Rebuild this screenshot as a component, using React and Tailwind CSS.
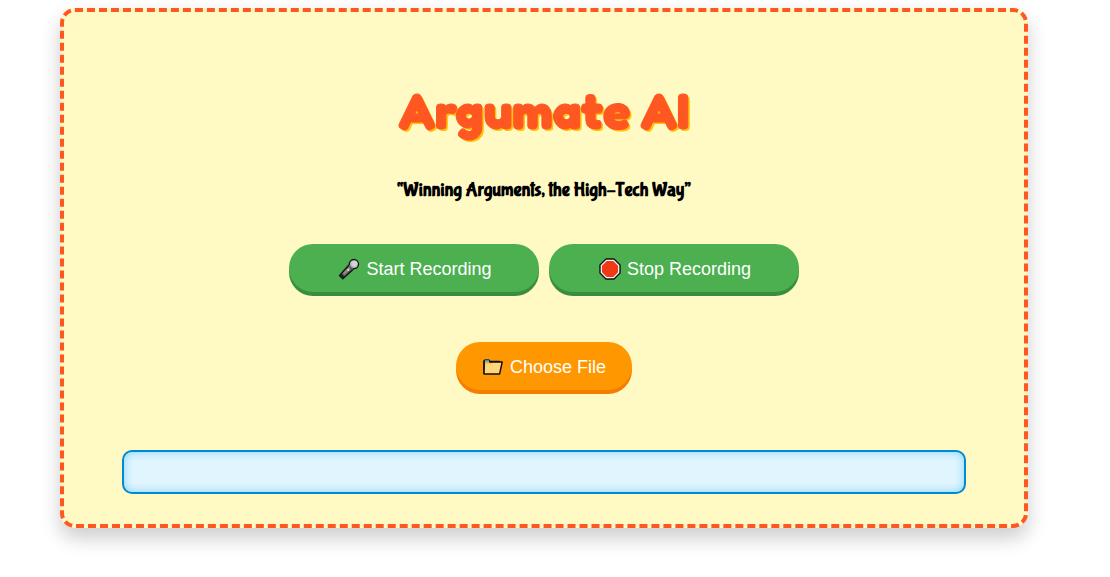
import React from 'react';

function MicIcon() {
  return (
    <svg aria-hidden="true" className="size-[22px] shrink-0" viewBox="0 0 22 22">
      <path d="M10.6 7.2 15 11.4 4.8 20.8 1.4 17.6Z" fill="#5f5f5f" stroke="#111" strokeWidth="1.3" strokeLinejoin="round" />
      <path d="M11 8.8 12.8 10.6 6.6 16.8 4.9 15.2Z" fill="#8d8d8d" />
      <path d="M2.8 16.4 5.8 19.4" stroke="#1c1c1c" strokeWidth="1.8" />
      <circle cx="15.9" cy="6.1" r="4.6" fill="#bdbdbd" stroke="#111" strokeWidth="1.3" />
      <path d="M11.1 7.2 14.8 10.9" stroke="#7a7a7a" strokeWidth="1.4" />
      <circle cx="16.5" cy="5.6" r="2.8" fill="#d4d4d4" />
      <circle cx="10.3" cy="12" r="1" fill="#e4e4e4" />
    </svg>
  );
}

function StopIcon() {
  return (
    <svg aria-hidden="true" className="size-[22px] shrink-0" viewBox="0 0 22 22">
      <path d="M7 1H15L21 7V15L15 21H7L1 15V7Z" fill="#fff" stroke="#111" strokeWidth="1.4" strokeLinejoin="round" />
      <path d="M7.7 2.9H14.3L19.1 7.7V14.3L14.3 19.1H7.7L2.9 14.3V7.7Z" fill="#f03a17" />
    </svg>
  );
}

function FolderIcon() {
  return (
    <svg aria-hidden="true" className="size-[22px] shrink-0" viewBox="0 0 22 22">
      <path d="M2 18V4.8L3 4H6.8L8 5.5H17.5V7" fill="#e8b04c" stroke="#111" strokeWidth="1.4" strokeLinejoin="round" />
      <path d="M2 18 3.7 7.6H9L10.4 6H20.2L17.6 18Z" fill="#ffd679" />
      <path d="M7.5 6H20.2L17.6 18H2V5" fill="none" stroke="#111" strokeWidth="1.4" strokeLinejoin="round" />
      <path d="M3 4.6H7" stroke="#2497dc" strokeWidth="1.6" />
    </svg>
  );
}

const pill =
  'flex cursor-pointer items-center justify-center gap-[6px] rounded-full pt-[11px] pb-[9px] text-lg leading-7 text-white';

export default function App() {
  return (
    <div className="pt-2 pr-[82px] pb-10 pl-[60px] font-['Liberation_Sans',Arial,sans-serif]">
      <main className="flex flex-col items-center rounded-[15px] border-4 border-dashed border-[#ff5722] bg-[#fff9c4] px-[58px] pt-[68px] pb-[30px] text-center shadow-[0_10px_20px_rgba(0,0,0,0.2)]">
        <h1 className="text-[51px] leading-[60px] font-bold text-[#ff5722] [-webkit-text-stroke:1px_#ff5722] [font-family:Fredoka,'Fredoka_One',Inter,sans-serif] [text-shadow:2px_2px_0_#ffc107]">
          Argumate AI
        </h1>
        <p className="mt-[38px] text-[19px] leading-6 font-bold text-black [font-family:'Bubblegum_Sans','Open_Sans',sans-serif]">
          “Winning Arguments, the High–Tech Way”
        </p>
        <div className="mt-[42px] flex flex-wrap justify-center gap-[10px]">
          <button type="button" className={`${pill} w-[250px] bg-[#4caf50] pl-[2px] shadow-[0_4px_0_#388e3c]`}>
            <MicIcon />
            Start Recording
          </button>
          <button type="button" className={`${pill} w-[250px] bg-[#4caf50] pl-[2px] shadow-[0_4px_0_#388e3c]`}>
            <StopIcon />
            Stop Recording
          </button>
        </div>
        <button type="button" className={`${pill} mt-[50px] bg-[#ff9800] px-[26px] shadow-[0_4px_0_#f57c00]`}>
          <FolderIcon />
          Choose File
        </button>
        <output
          aria-label="Result"
          className="mt-[60px] block h-11 w-full rounded-[10px] border-2 border-[#0288d1] bg-[#e1f5fe] shadow-[inset_0_0_10px_#81d4fa]"
        />
      </main>
    </div>
  );
}
